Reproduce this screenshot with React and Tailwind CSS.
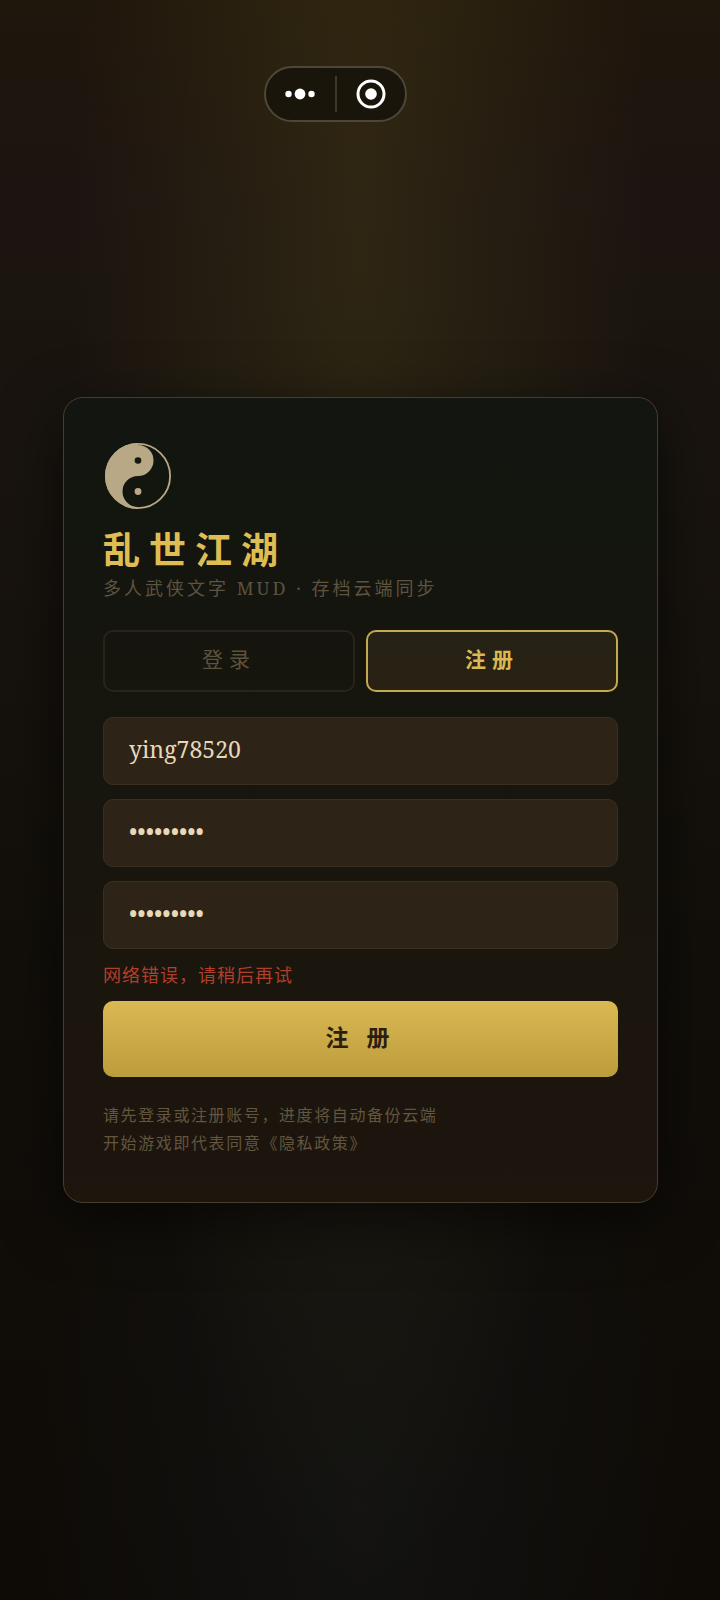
import React, { useState } from "react";

const Taiji = () => (
  <svg viewBox="0 0 70 70" className="size-[70px] text-[#b9a886]" aria-hidden="true">
    <circle cx="35" cy="35" r="32.100" fill="none" stroke="currentColor" strokeWidth="1.800" />
    <path
      d="M35 2a33 33 0 0 0 0 66v-2a15.500 15.500 0 0 1 0-31a15.500 15.500 0 0 0 0-31z"
      fill="currentColor"
    />
    <circle cx="35" cy="19.500" r="3.300" fill="#14160f" />
    <circle cx="35" cy="50.500" r="3.400" fill="currentColor" />
  </svg>
);

// Mini program capsule that floats over the page
const Capsule = () => (
  <div className="absolute top-[66px] left-[264px] flex h-14 w-[143px] items-center rounded-full border-2 border-[#4e4737] bg-[#19150b]">
    <button type="button" aria-label="更多" className="flex flex-1 justify-center">
      <svg viewBox="0 0 32 12" className="h-3 w-8" fill="#fff">
        <circle cx="4.500" cy="6" r="3.200" />
        <circle cx="16" cy="6" r="5.400" />
        <circle cx="27.500" cy="6" r="3.200" />
      </svg>
    </button>
    <span className="h-9 w-0.5 bg-[#3f392b]" />
    <button type="button" aria-label="关闭" className="flex flex-1 justify-center">
      <svg viewBox="0 0 30 30" className="size-[30px]">
        <circle cx="15" cy="15" r="13" fill="none" stroke="#fff" strokeWidth="3" />
        <circle cx="15" cy="15" r="5.800" fill="#fff" />
      </svg>
    </button>
  </div>
);

const Tab = ({ active, onClick, children }) => (
  <button
    type="button"
    role="tab"
    aria-selected={active}
    onClick={onClick}
    className={
      active
        ? "h-[62px] flex-1 rounded-[10px] border-2 border-[#c5a950] bg-linear-to-b from-[#252215] to-[#292114] pb-0.5 text-[21px] font-bold tracking-[6px] text-[#dab852]"
        : "h-[62px] flex-1 rounded-[10px] border-2 border-[#2a2418] pb-0.5 text-[21px] tracking-[6px] text-[#5e523c]"
    }
  >
    {children}
  </button>
);

const Field = (props) => (
  <input
    {...props}
    className="h-[68px] w-full rounded-[10px] border border-[#3a3020] bg-[#2d2316] px-[25px] pb-1 font-['Noto_Serif','Liberation_Serif',serif] text-[23px] text-[#e8d8b8] outline-none"
  />
);

export default function App() {
  const [mode, setMode] = useState("register");
  const isRegister = mode === "register";
  const action = isRegister ? "注 册" : "登 录";

  return (
    <div className="relative flex min-h-screen items-center bg-[#0f0c07] bg-[radial-gradient(ellipse_40%_85%_at_50%_15%,rgba(200,180,50,0.11),transparent),radial-gradient(ellipse_45%_50%_at_50%_95%,rgba(28,34,40,0.3),transparent),linear-gradient(180deg,#1f160c_0%,#1c1410_12%,#19140f_28%,#120f0a_60%,#0e0b07_100%)] pr-[62px] pl-[63px] font-['Noto_Serif','Liberation_Serif','Noto_Sans_CJK_SC',serif]">
      <Capsule />

      <main className="w-full rounded-[20px] border border-[#463d2b] bg-linear-to-b from-[#121510] via-[#17150e] to-[#1e150d] px-[39px] pt-[43px] pb-[45px] shadow-[0_16px_60px_rgba(0,0,0,0.6)]">
        <Taiji />
        <h1 className="mt-[14px] mb-px text-[37px] leading-[50px] font-bold tracking-[9px] text-[#dfbd52]">
          乱世江湖
        </h1>
        <p className="text-[18px] leading-6 tracking-[3px] text-[#5d533f]">
          多人武侠文字 MUD · 存档云端同步
        </p>

        <div role="tablist" className="mt-[30px] flex gap-[11px]">
          <Tab active={!isRegister} onClick={() => setMode("login")}>
            登录
          </Tab>
          <Tab active={isRegister} onClick={() => setMode("register")}>
            注册
          </Tab>
        </div>

        <form onSubmit={(e) => e.preventDefault()}>
          <div className="mt-[25px] flex flex-col gap-[14px]">
            <Field aria-label="账号" type="text" defaultValue="ying78520" />
            <Field aria-label="密码" type="password" defaultValue="jianghu88" />
            {isRegister && (
              <Field aria-label="确认密码" type="password" defaultValue="jianghu88" />
            )}
          </div>
          <p role="alert" className="mt-3 text-[18px] leading-7 tracking-[1px] text-[#b03f2c]">
            网络错误，请稍后再试
          </p>
          <button
            type="submit"
            className="mt-3 h-[76px] w-full rounded-[10px] bg-linear-to-b from-[#dab853] to-[#bd9c3c] pb-1 text-[23px] font-bold tracking-[6px] text-[#2b2010]"
          >
            {action}
          </button>
        </form>

        <p className="mt-6 text-[16px] leading-7 tracking-widest text-[#62563f]">
          请先登录或注册账号，进度将自动备份云端
          <br />
          开始游戏即代表同意
          <a href="#privacy">《隐私政策》</a>
        </p>
      </main>
    </div>
  );
}
